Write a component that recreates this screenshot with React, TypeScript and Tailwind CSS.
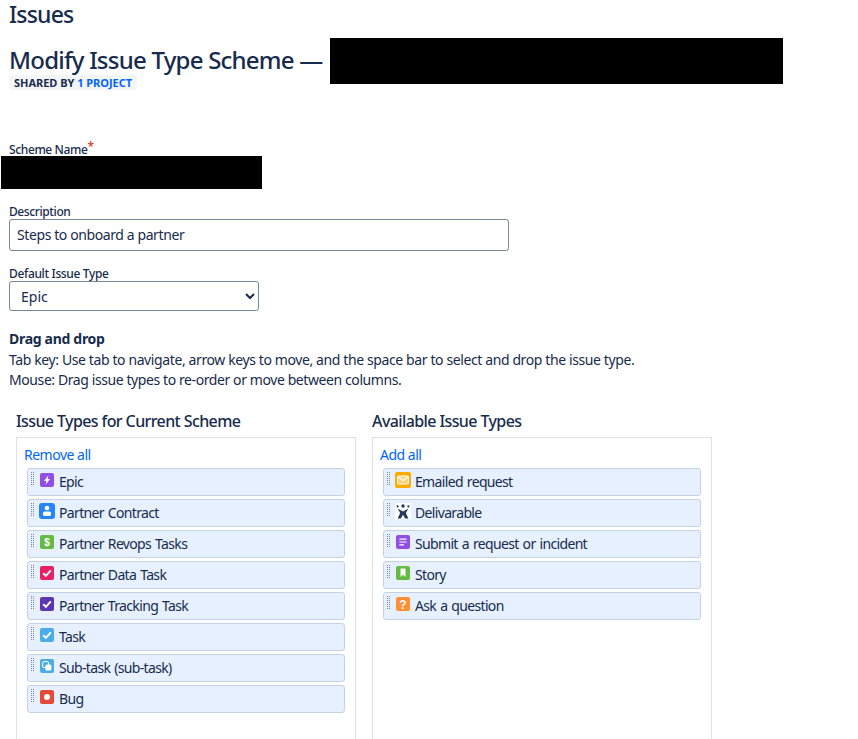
import React from "react";

const I = ({ bg, children, size = 14 }: { bg: string; children?: React.ReactNode; size?: number }) => (
  <svg width={size} height={size} viewBox="0 0 14 14" className="block">
    <rect width="14" height="14" rx="2" fill={bg} />
    {children}
  </svg>
);

const check = <path d="M3.2 7.2 L5.9 9.8 L10.8 4.4" stroke="#fff" strokeWidth="2" fill="none" />;

const left: [string, React.ReactNode, number][] = [
  ["Epic", <I bg="#904ee2"><path d="M8.4 2.2 L4 8 H6.4 L5.6 11.8 L10 6 H7.6 Z" fill="#fff" /></I>, 0],
  ["Partner Contract", <svg width="16" height="16" viewBox="0 0 16 16" className="block"><rect width="16" height="16" rx="3" fill="#2684ff" /><circle cx="8" cy="5" r="2.3" fill="#fff" /><rect x="4" y="8.4" width="8" height="4.6" rx="1.6" fill="#fff" /></svg>, -1],
  ["Partner Revops Tasks", <I bg="#65ba43"><text x="7" y="10.6" textAnchor="middle" fontSize="10" fontWeight="700" fill="#fff" fontFamily="'Liberation Sans', sans-serif">$</text></I>, 0],
  ["Partner Data Task", <I bg="#e91e63">{check}</I>, 0],
  ["Partner Tracking Task", <I bg="#5d35b0">{check}</I>, 0],
  ["Task", <I bg="#4bade8">{check}</I>, 0],
  ["Sub-task (sub-task)", <I bg="#4bade8"><rect x="2.6" y="2.6" width="6" height="6" rx="1.5" fill="none" stroke="#fff" strokeWidth="1" /><rect x="5.4" y="5.4" width="6" height="6" rx="1.5" fill="#fff" /></I>, 0],
  ["Bug", <I bg="#e5493a"><circle cx="7" cy="7" r="3" fill="#fff" /></I>, 0],
];

const right: [string, React.ReactNode, number][] = [
  ["Emailed request", <svg width="16" height="16" viewBox="0 0 16 16" className="block"><rect width="16" height="16" rx="2" fill="#ffab00" /><rect x="2.5" y="4" width="11" height="8" rx="1" fill="#ffd27a" stroke="#fff" strokeWidth="1" /><path d="M3 4.5 L8 8.6 L13 4.5" fill="none" stroke="#fff" strokeWidth="1.2" /></svg>, -1],
  ["Delivarable", <svg width="16" height="16" viewBox="0 0 16 16" className="block"><rect width="16" height="16" fill="#fff" /><circle cx="8" cy="3" r="1.7" fill="#253858" /><circle cx="2.6" cy="3.4" r="1.1" fill="#253858" /><circle cx="13.4" cy="3.4" r="1.1" fill="#253858" /><path d="M2.6 5.6 L8 8.4 L13.4 5.6 L10.8 10 L13.4 15.5 H10.2 L8 11.8 L5.8 15.5 H2.6 L5.2 10 Z" fill="#253858" /></svg>, -1],
  ["Submit a request or incident", <I bg="#904ee2"><path d="M3.4 4.2 H10.6 M3.4 7 H10.6 M3.4 9.8 H8" stroke="#fff" strokeWidth="1.2" /></I>, 0],
  ["Story", <I bg="#65ba43"><path d="M4.5 2.5 H9.5 V11 L7 8.8 L4.5 11 Z" fill="#fff" /></I>, 0],
  ["Ask a question", <I bg="#ff8f33"><text x="7" y="11.6" textAnchor="middle" fontSize="12" fontWeight="700" fill="#fff" fontFamily="'Liberation Sans', sans-serif">?</text></I>, 0],
];

const Grip = () => (
  <svg width="4" height="14" viewBox="0 0 4 14" className="mt-[3px] shrink-0 block" fill="#7a869a">
    {[0, 2, 4, 6, 8, 10, 12].map((y) => (
      <g key={y}>
        <rect x="0" y={y} width="1" height="1" />
        <rect x="2" y={y} width="1" height="1" />
      </g>
    ))}
  </svg>
);

const Row = ({ name, icon, nudge }: { name: string; icon: React.ReactNode; nudge: number }) => (
  <div className="flex h-[28px] mb-[3px] rounded-[3px] border border-[#c5d2e6] bg-[#e6f0ff] items-start pl-[3px]">
    <Grip />
    <div className={nudge ? "mt-[3px] ml-[4px] mr-[4px] w-[16px] shrink-0" : "mt-[4px] ml-[5px] mr-[5px] w-[14px] shrink-0"}>{icon}</div>
    <span className="leading-[26px] text-[14px] text-[#172b4d] tracking-[-0.66px] [word-spacing:1px] whitespace-nowrap">{name}</span>
  </div>
);

const Column = ({ title, action, items }: { title: string; action: string; items: [string, React.ReactNode, number][] }) => (
  <div className="w-[340px] shrink-0">
    <h3 className="text-[16px] leading-[20px] h-[26px] mt-[1px] font-medium text-[#172b4d] tracking-[-0.6px]">{title}</h3>
    <div className="h-[320px] border border-[#dfe1e6] pl-[10px] pr-[10px] pt-[7px]">
      <a className="block -ml-[3px] leading-[20px] h-[23px] text-[14px] text-[#0065ff] tracking-[-0.5px]">{action}</a>
      {items.map(([n, ic, nudge]) => (
        <Row key={n} name={n} icon={ic} nudge={nudge} />
      ))}
    </div>
  </div>
);

export default function App() {
  return (
    <div className="h-[739px] overflow-hidden bg-white pl-[9px] text-[#172b4d] font-['Noto_Sans','Open_Sans',sans-serif]">
      <h1 className="text-[23px] leading-[28px] font-medium tracking-[-0.8px]">Issues</h1>
      <div className="mt-[10px] h-[46px] flex items-start">
        <h2 className="text-[24px] leading-[44px] font-medium tracking-[-0.77px] whitespace-nowrap">Modify Issue Type Scheme —</h2>
        <div className="ml-[7px] w-[453px] h-[46px] bg-black" />
      </div>
      <div className="-mt-[9px] block w-fit rounded-[3px] bg-[#f4f5f7] px-[5px] h-[15px] leading-[15px] text-[11px] font-bold tracking-[-0.03px] uppercase">
        Shared by <span className="text-[#0065ff]">1 project</span>
      </div>
      <label className="block mt-[53px] h-[13px] text-[12px] leading-[14px] font-medium tracking-[-0.38px] text-[#172b4d]">
        Scheme Name<sup className="text-[#de350b] text-[12px] leading-none top-[-3px]">*</sup>
      </label>
      <div className="-ml-[8px] h-[33px] w-[261px] bg-black" />
      <label className="block mt-[16px] h-[14px] text-[12px] leading-[14px] font-medium tracking-[-0.4px] text-[#172b4d]">Description</label>
      <input readOnly value="Steps to onboard a partner" className="block w-[500px] h-[32px] rounded-[3px] border border-[#7a869a] px-[7px] pb-[2px] text-[14px] text-[#172b4d] tracking-[-0.4px] outline-none" />
      <label className="block mt-[16px] h-[14px] text-[12px] leading-[14px] font-medium tracking-[-0.35px] text-[#172b4d]">Default Issue Type</label>
      <select defaultValue="Epic" className="block w-[250px] h-[30px] rounded-[3px] border border-[#7a869a] bg-white pl-[7px] text-[14px] text-[#172b4d]">
        <option>Epic</option>
      </select>
      <p className="mt-[18px] text-[14px] leading-[20px] h-[21px] font-bold tracking-[-0.3px]">Drag and drop</p>
      <p className="text-[14px] leading-[20px] tracking-[-0.39px] text-[#172b4d] whitespace-nowrap">Tab key: Use tab to navigate, arrow keys to move, and the space bar to select and drop the issue type.</p>
      <p className="text-[14px] leading-[20px] tracking-[-0.41px] text-[#172b4d] whitespace-nowrap">Mouse: Drag issue types to re-order or move between columns.</p>
      <div className="mt-[20px] ml-[7px] flex gap-[16px]">
        <Column title="Issue Types for Current Scheme" action="Remove all" items={left} />
        <Column title="Available Issue Types" action="Add all" items={right} />
      </div>
    </div>
  );
}
